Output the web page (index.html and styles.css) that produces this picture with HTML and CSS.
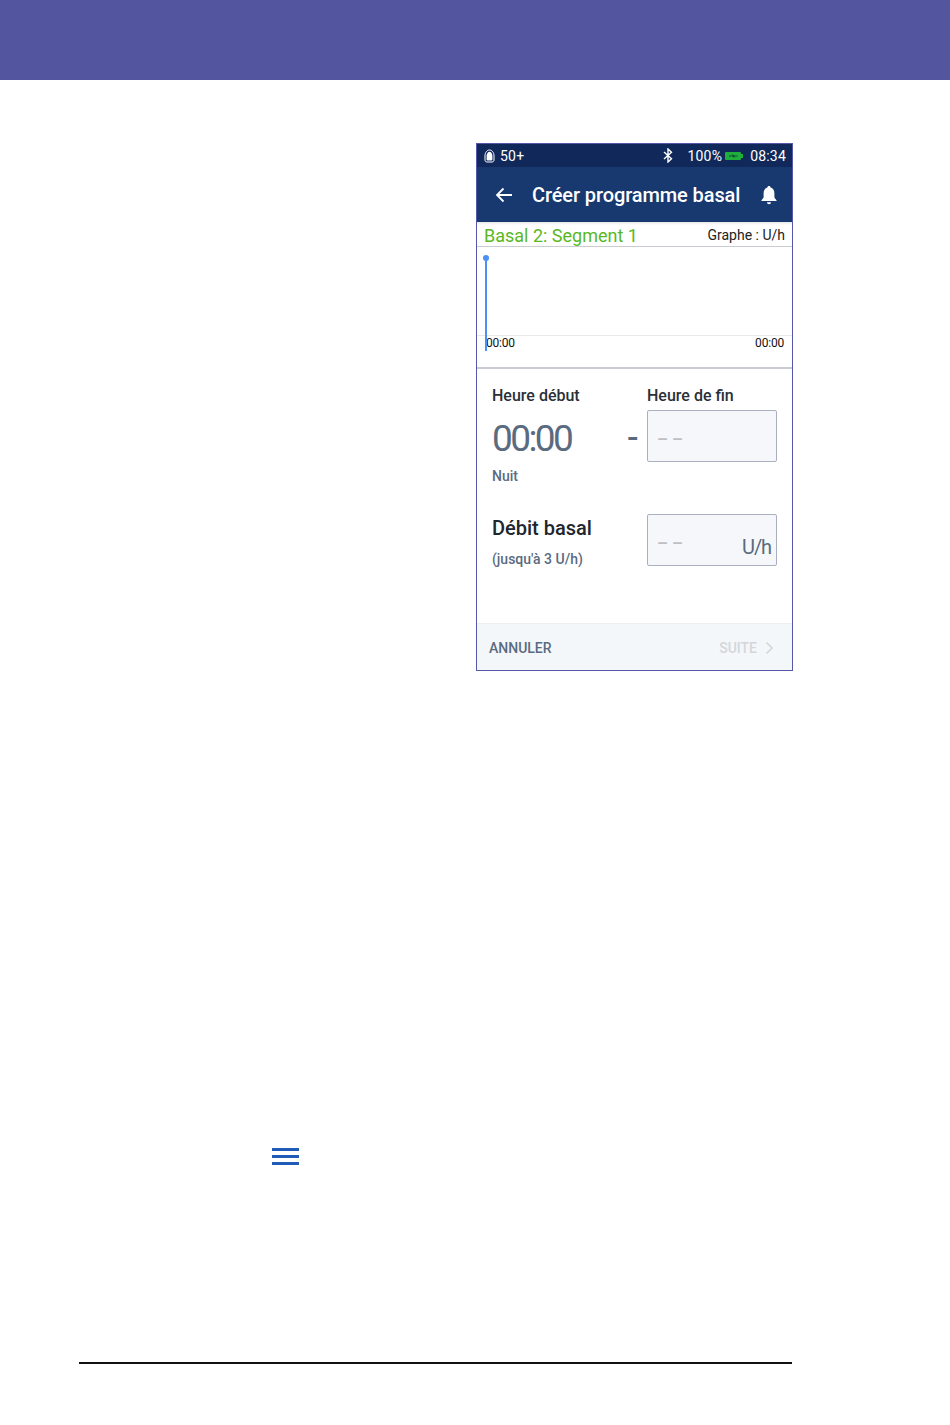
FILE: index.html
```html
<!DOCTYPE html>
<html lang="fr">
<head>
    <meta charset="UTF-8">
    <meta name="viewport" content="width=device-width, initial-scale=1.0">
    <title>Créer programme basal</title>
    <link rel="stylesheet" href="styles.css">
</head>
<body>
    <div class="top-band"></div>

    <div class="phone">
        <!-- Status bar -->
        <div class="status-bar">
            <div class="status-left">
                <svg class="pod-icon" width="11" height="14" viewBox="0 0 11 14">
                    <path d="M5.5 1 C3 1 1 3.5 1 7 V11 C1 12.2 1.8 13 3 13 H8 C9.2 13 10 12.2 10 11 V7 C10 3.5 8 1 5.5 1 Z" fill="none" stroke="#fff" stroke-width="1"/>
                    <path d="M5.5 2.8 C4 2.8 2.6 4.5 2.6 7 V10.5 C2.6 11 3 11.4 3.5 11.4 H7.5 C8 11.4 8.4 11 8.4 10.5 V7 C8.4 4.5 7 2.8 5.5 2.8 Z" fill="#fff"/>
                </svg>
                <span>50+</span>
            </div>
            <div class="status-right">
                <svg class="bt-icon" width="10" height="15" viewBox="0 0 10 15">
                    <path d="M1 4 L8.5 10.8 L5 14 V1 L8.5 4.2 L1 11" fill="none" stroke="#fff" stroke-width="1.4"/>
                </svg>
                <span class="battery-pct">100%</span>
                <svg class="battery-icon" width="18" height="10" viewBox="0 0 18 10">
                    <rect x="0" y="1" width="16" height="8" rx="1" fill="#1fae3a"/>
                    <rect x="16" y="3" width="2" height="4" fill="#1fae3a"/>
                    <path d="M4 4.4 H7.5 V3 L9.5 4.4 H12.5 V5.6 H9.5 V7 L7.5 5.6 H4 Z" fill="#0e4a3a"/>
                </svg>
                <span>08:34</span>
            </div>
        </div>

        <!-- Title bar -->
        <div class="title-bar">
            <svg class="back-icon" width="18" height="16" viewBox="0 0 18 16">
                <path d="M17 8 H2 M8.5 1.5 L2 8 L8.5 14.5" fill="none" stroke="#fff" stroke-width="1.8"/>
            </svg>
            <h1>Créer programme basal</h1>
            <svg class="bell-icon" width="18" height="20" viewBox="0 0 18 20">
                <path d="M9 1 C10 1 10.6 1.6 10.6 2.6 C13.2 3.4 14.4 5.6 14.4 8.4 V12.6 L16.6 15.4 V16 H1.4 V15.4 L3.6 12.6 V8.4 C3.6 5.6 4.8 3.4 7.4 2.6 C7.4 1.6 8 1 9 1 Z" fill="#fff"/>
                <path d="M7 17.2 H11 C11 18.4 10.1 19.2 9 19.2 C7.9 19.2 7 18.4 7 17.2 Z" fill="#fff"/>
            </svg>
        </div>

        <!-- Segment heading -->
        <div class="segment-bar">
            <span class="segment-name">Basal 2: Segment 1</span>
            <span class="graph-unit">Graphe : U/h</span>
        </div>

        <!-- Chart -->
        <div class="chart">
            <svg class="chart-marker" width="6" height="96" viewBox="0 0 6 96">
                <rect x="2" y="4" width="2" height="92" fill="#4a90f5"/>
                <circle cx="3" cy="3" r="3" fill="#4a90f5"/>
            </svg>
            <div class="chart-plot"></div>
            <div class="chart-labels">
                <span>00:00</span>
                <span>00:00</span>
            </div>
        </div>

        <!-- Form -->
        <div class="form">
            <div class="form-row time-row">
                <div class="col-left">
                    <div class="label">Heure début</div>
                    <div class="start-time">00:00</div>
                    <div class="note note-night">Nuit</div>
                </div>
                <div class="dash">-</div>
                <div class="col-right">
                    <div class="label">Heure de fin</div>
                    <div class="input-box"><span class="placeholder">– –</span></div>
                </div>
            </div>
            <div class="form-row rate-row">
                <div class="col-left">
                    <div class="label-big">Débit basal</div>
                    <div class="note">(jusqu'à 3 U/h)</div>
                </div>
                <div class="col-right">
                    <div class="input-box"><span class="placeholder">– –</span><span class="unit">U/h</span></div>
                </div>
            </div>
        </div>

        <!-- Footer buttons -->
        <div class="actions">
            <span class="btn-cancel">ANNULER</span>
            <span class="btn-next">SUITE
                <svg width="9" height="14" viewBox="0 0 9 14">
                    <path d="M1.5 1.5 L7 7 L1.5 12.5" fill="none" stroke="#d3d6da" stroke-width="1.6"/>
                </svg>
            </span>
        </div>
    </div>

    <div class="menu-icon">
        <span></span>
        <span></span>
        <span></span>
    </div>

    <div class="page-rule"></div>
</body>
</html>
```

FILE: styles.css
```css
body {
    font-family: Roboto, "Liberation Sans", sans-serif;
    background-color: #fff;
    margin: 0;
    padding: 0;
}
.top-band {
    height: 80px;
    background-color: #53569e;
}
.phone {
    width: 315px;
    height: 526px;
    margin: 63px 0 0 476px;
    border: 1px solid #5558a8;
    display: flex;
    flex-direction: column;
}
.status-bar {
    height: 23px;
    background-color: #10295a;
    color: #fff;
    font-size: 14px;
    letter-spacing: 0.2px;
    display: flex;
    justify-content: space-between;
    align-items: center;
    padding: 0 6px 0 7px;
    flex-shrink: 0;
}
.status-left, .status-right {
    display: flex;
    align-items: center;
}
.pod-icon {
    margin-right: 5px;
}
.bt-icon {
    margin-right: 14px;
}
.battery-pct {
    margin-right: 3px;
}
.battery-icon {
    margin-right: 7px;
}
.title-bar {
    height: 55px;
    background-color: #17396f;
    color: #fff;
    display: flex;
    align-items: center;
    padding: 0 14px 0 18px;
    flex-shrink: 0;
}
.title-bar h1 {
    font-size: 20px;
    font-weight: 500;
    letter-spacing: -0.1px;
    margin: 0 0 0 19px;
    flex: 1;
    white-space: nowrap;
}
.segment-bar {
    height: 23px;
    display: flex;
    justify-content: space-between;
    align-items: center;
    padding: 1px 7px 0 7px;
    border-bottom: 1px solid #c9ccd1;
    box-shadow: inset 0 3px 3px -2px #ddd;
    flex-shrink: 0;
}
.segment-name {
    color: #5ab81e;
    font-size: 18px;
    padding-top: 1px;
}
.graph-unit {
    color: #222;
    font-size: 14px;
}
.chart {
    position: relative;
    height: 120px;
    border-bottom: 2px solid #c9ccd4;
    flex-shrink: 0;
}
.chart-marker {
    position: absolute;
    left: 6px;
    top: 8px;
}
.chart-plot {
    height: 88px;
    border-bottom: 1px solid #e8e8e8;
}
.chart-labels {
    display: flex;
    justify-content: space-between;
    padding: 0 8px 0 9px;
    font-size: 12px;
    letter-spacing: -0.2px;
    color: #111;
}
.form {
    flex: 1;
    padding: 0 15px;
}
.form-row {
    display: flex;
}
.time-row {
    padding-top: 17px;
}
.rate-row {
    padding-top: 30px;
}
.rate-row .col-right {
    margin-left: 20px;
}
.col-left {
    width: 135px;
    color: #5a6b80;
}
.col-right {
    width: 130px;
}
.dash {
    width: 20px;
    font-size: 34px;
    line-height: 34px;
    font-weight: 500;
    color: #5a6b80;
    padding-top: 34px;
}
.label {
    font-size: 16px;
    font-weight: 500;
    color: #2a3038;
    height: 24px;
    line-height: 19px;
}
.label-big {
    font-size: 20px;
    font-weight: 500;
    color: #20262e;
    height: 37px;
    line-height: 28px;
}
.start-time {
    font-size: 37px;
    letter-spacing: -2.6px;
    line-height: 44px;
    padding-top: 7px;
    color: #5a6b80;
}
.note {
    font-size: 14px;
    font-weight: 500;
    color: #5a6b80;
}
.note-night {
    margin-top: 7px;
}
.input-box {
    height: 50px;
    background-color: #f5f7fa;
    border: 1px solid #a9afbf;
    border-radius: 2px;
    display: flex;
    justify-content: space-between;
    align-items: center;
    padding: 0 5px 0 9px;
    width: 114px;
}
.placeholder {
    color: #bcc0c6;
    font-size: 17px;
    font-weight: 700;
    padding-top: 5px;
}
.unit {
    font-size: 20px;
    color: #5a6b80;
    letter-spacing: -1.1px;
    padding-top: 14px;
}
.actions {
    height: 44px;
    background-color: #f4f7fa;
    border-top: 1px solid #eceef1;
    display: flex;
    justify-content: space-between;
    align-items: center;
    padding: 2px 18px 0 12px;
    font-size: 14px;
    font-weight: 500;
    flex-shrink: 0;
}
.btn-cancel {
    color: #5a6b80;
}
.btn-next {
    color: #d3d6da;
    display: flex;
    align-items: center;
    gap: 8px;
}
.menu-icon {
    width: 27px;
    margin: 477px 0 0 272px;
    display: flex;
    flex-direction: column;
    gap: 4px;
}
.menu-icon span {
    display: block;
    height: 3px;
    background-color: #1f5cb8;
}
.page-rule {
    width: 713px;
    height: 2px;
    margin: 197px 0 0 79px;
    background-color: #111;
}
```
